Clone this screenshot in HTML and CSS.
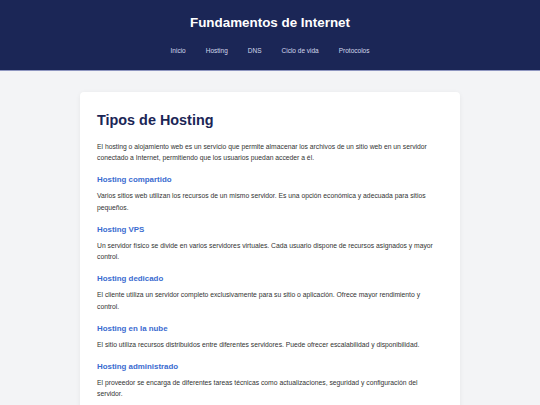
FILE: index.html
```html
<!DOCTYPE html>
<html lang="es">
<head>
<meta charset="utf-8">
<title>Fundamentos de Internet</title>
<link rel="stylesheet" href="styles.css">
</head>
<body>
<header class="site-header">
  <h1 class="site-title">Fundamentos de Internet</h1>
  <nav class="site-nav">
    <a href="#">Inicio</a>
    <a href="#">Hosting</a>
    <a href="#">DNS</a>
    <a href="#">Ciclo de vida</a>
    <a href="#">Protocolos</a>
  </nav>
</header>
<main class="card">
  <h2 class="card-title">Tipos de Hosting</h2>
  <p>El hosting o alojamiento web es un servicio que permite almacenar los archivos de un sitio web en un servidor conectado a Internet, permitiendo que los usuarios puedan acceder a él.</p>
  <h3>Hosting compartido</h3>
  <p>Varios sitios web utilizan los recursos de un mismo servidor. Es una opción económica y adecuada para sitios pequeños.</p>
  <h3>Hosting VPS</h3>
  <p>Un servidor físico se divide en varios servidores virtuales. Cada usuario dispone de recursos asignados y mayor control.</p>
  <h3>Hosting dedicado</h3>
  <p>El cliente utiliza un servidor completo exclusivamente para su sitio o aplicación. Ofrece mayor rendimiento y control.</p>
  <h3>Hosting en la nube</h3>
  <p>El sitio utiliza recursos distribuidos entre diferentes servidores. Puede ofrecer escalabilidad y disponibilidad.</p>
  <h3>Hosting administrado</h3>
  <p>El proveedor se encarga de diferentes tareas técnicas como actualizaciones, seguridad y configuración del servidor.</p>
</main>
</body>
</html>
```

FILE: styles.css
```css
* { box-sizing: border-box; }

body {
  margin: 0;
  background: #f3f4f6;
  font-family: "Liberation Sans", Arial, sans-serif;
  font-size: 6.78px;
  color: #333333;
}

.site-header {
  background: #1b2656;
  height: 71px;
  border-bottom: 1px solid #8e96c0;
  text-align: center;
  padding-top: 13.5px;
}

.site-title {
  margin: 0;
  font-size: 13.4px;
  line-height: 17px;
  font-weight: bold;
  color: #ffffff;
}

.site-nav {
  display: flex;
  justify-content: center;
  gap: 20px;
  margin-top: 15.5px;
}

.site-nav a {
  color: #d3d7ec;
  text-decoration: none;
  font-size: 6.5px;
  line-height: 9px;
}

.card {
  width: 380px;
  margin: 21px auto 0;
  background: #ffffff;
  border-radius: 4px;
  box-shadow: 0 1px 5px rgba(0, 0, 0, 0.06);
  padding: 20px 17px 20px;
}

.card-title {
  margin: 0 0 11.6px;
  font-size: 14.4px;
  line-height: 17px;
  font-weight: bold;
  color: #1b2656;
}

.card p {
  margin: 0;
  line-height: 11.5px;
}

.card h3 {
  margin: 11.8px 0 5.2px;
  font-size: 7.9px;
  line-height: 9.5px;
  font-weight: bold;
  color: #3a6bd0;
}
```
